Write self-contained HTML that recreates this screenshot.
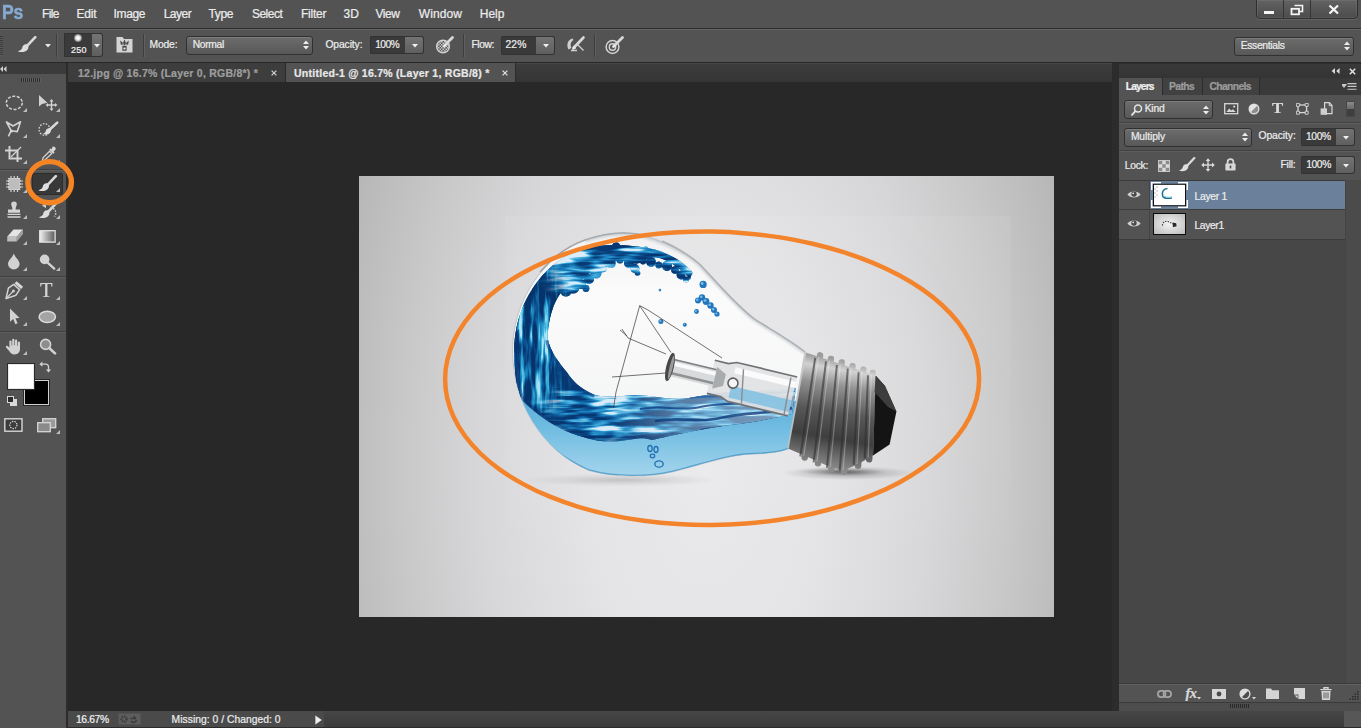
<!DOCTYPE html>
<html lang="en">
<head>
<meta charset="utf-8">
<title>Photoshop</title>
<style>
*{box-sizing:border-box;margin:0;padding:0}
html,body{width:1361px;height:728px;overflow:hidden;background:#282828}
body{position:relative;font-family:"Liberation Sans",sans-serif;font-size:12px;color:#ececec}
.a{position:absolute}
.t{position:absolute;white-space:nowrap;line-height:1;transform-origin:0 0;-webkit-text-stroke:.22px currentColor}
/* ---------- bars ---------- */
#menubar{left:0;top:0;width:1361px;height:28px;background:#535353}
#menuline1{left:0;top:28px;width:1361px;height:1px;background:#2c2c2c}
#optbar{left:0;top:29px;width:1361px;height:33px;background:#535353;border-top:1px solid #666}
#optline{left:0;top:62px;width:1361px;height:1px;background:#272727}
#toolbox{left:0;top:63px;width:66px;height:665px;background:#535353}
#toolhead{left:0;top:63px;width:66px;height:11px;background:#3b3b3b}
#toolsep{left:66px;top:63px;width:2px;height:665px;background:#2c2c2c}
#tabstrip{left:68px;top:63px;width:1045px;height:19px;background:linear-gradient(#474747 0 1px,#3c3c3c 1px,#353535)}
#canvasbg{left:68px;top:82px;width:1051px;height:629px;background:#282828}
#statusband{left:68px;top:711px;width:1293px;height:16px;background:linear-gradient(#464646,#3b3b3b)}
#statusbar{left:68px;top:711px;width:256px;height:16px;background:#4a4a4a}
#bottomline{left:68px;top:727px;width:1293px;height:1px;background:#2b2b2b}
/* ---------- panel ---------- */
#panel{left:1119px;top:63px;width:242px;height:648px;background:#535353}
#panelhead{left:1119px;top:63px;width:242px;height:15px;background:#3a3a3a}
#paneltabs{left:1119px;top:78px;width:242px;height:17px;background:#3e3e3e}
.dd{position:absolute;border:1px solid #303030;border-radius:3px;background:linear-gradient(#6c6c6c,#585858);box-shadow:inset 0 1px 0 rgba(255,255,255,.12)}
.field{position:absolute;background:#3a3a3a;border:1px solid #323232}
.fbtn{position:absolute;background:linear-gradient(#737373,#5f5f5f);border:1px solid #323232;border-left:none;border-radius:0 3px 3px 0}
</style>
</head>
<body>
<!-- base blocks -->
<div class="a" id="menubar"></div>
<div class="a" id="menuline1"></div>
<div class="a" id="optbar"></div>
<div class="a" id="optline"></div>
<div class="a" id="tabstrip"></div>
<div class="a" id="canvasbg"></div>
<div class="a" id="toolbox"></div>
<div class="a" id="toolhead"></div>
<div class="a" id="toolsep"></div>
<div class="a" id="statusband"></div>
<div class="a" id="statusbar"></div>
<div class="a" id="bottomline"></div>
<div class="a" id="panel"></div>
<div class="a" id="panelhead"></div>
<div class="a" id="paneltabs"></div>

<!--MENU-->
<span class="t" style="left:2.2px;top:2.6px;font-size:19.5px;font-weight:700;color:#86aad2;transform:scaleX(.9);letter-spacing:-.3px;-webkit-text-stroke:.5px #86aad2">Ps</span>
<span class="t" style="left:42.1px;top:7.8px;font-size:12px;letter-spacing:-0.65px">File</span>
<span class="t" style="left:76.5px;top:7.8px;font-size:12px;letter-spacing:-0.23px">Edit</span>
<span class="t" style="left:113.5px;top:7.8px;font-size:12px;letter-spacing:-0.34px">Image</span>
<span class="t" style="left:163.7px;top:7.8px;font-size:12px;letter-spacing:-0.51px">Layer</span>
<span class="t" style="left:208.5px;top:7.8px;font-size:12px;letter-spacing:-0.34px">Type</span>
<span class="t" style="left:251.9px;top:7.8px;font-size:12px;letter-spacing:-0.49px">Select</span>
<span class="t" style="left:300.9px;top:7.8px;font-size:12px;letter-spacing:-0.21px">Filter</span>
<span class="t" style="left:343.5px;top:7.8px;font-size:12px;letter-spacing:0.16px">3D</span>
<span class="t" style="left:375.5px;top:7.8px;font-size:12px;letter-spacing:-0.43px">View</span>
<span class="t" style="left:418.8px;top:7.8px;font-size:12px;letter-spacing:0.1px">Window</span>
<span class="t" style="left:479.7px;top:7.8px;font-size:12px;letter-spacing:0.04px">Help</span>
<div class="a" style="left:1256px;top:-1px;width:102px;height:20px;border:1px solid #2f2f2f;border-radius:0 0 4px 4px;background:linear-gradient(#626262,#4c4c4c);box-shadow:0 1px 0 rgba(255,255,255,.10), inset 0 0 0 1px rgba(255,255,255,.07)"></div>
<div class="a" style="left:1283px;top:0;width:1px;height:18px;background:#353535"></div>
<div class="a" style="left:1310px;top:0;width:1px;height:18px;background:#353535"></div>
<div class="a" style="left:1264px;top:11px;width:10px;height:3px;background:#f4f4f4"></div>
<svg class="a" style="left:1290px;top:4px" width="14" height="12" viewBox="0 0 14 12"><path d="M4.5 1.5h8v6h-3" fill="none" stroke="#f4f4f4" stroke-width="1.6"/><rect x="1.5" y="4.8" width="7.5" height="5.5" fill="none" stroke="#f4f4f4" stroke-width="1.8"/></svg>
<svg class="a" style="left:1328px;top:4px" width="12" height="11" viewBox="0 0 12 11"><path d="M1.5 1.5l8.5 8M10 1.5l-8.5 8" stroke="#f4f4f4" stroke-width="2.3" fill="none"/></svg>
<!--OPTIONS-->
<div class="a" style="left:0;top:36px;width:3px;height:20px;background:repeating-linear-gradient(#3a3a3a 0 1px,#5a5a5a 1px 2px)"></div>
<svg class="a" style="left:17px;top:36px" width="20" height="17" viewBox="0 0 20 17"><path d="M18.3 1.2L9.6 10.4" stroke="#d9d9d9" stroke-width="2.6" stroke-linecap="round" fill="none"/><path d="M10.2 8.6C8 7.6 5.6 9.2 5.3 11.4C5 13.6 2.6 14.8 0.8 15.2C4.4 17 9.4 16.2 11.2 12.4C11.8 11 11.4 9.4 10.2 8.6Z" fill="#dedede"/></svg>
<svg class="a" style="left:45px;top:44px" width="6" height="4" viewBox="0 0 6 4"><path d="M0 0h6L3 3.6z" fill="#e6e6e6"/></svg>
<div class="a" style="left:56px;top:34px;width:1px;height:23px;background:#3e3e3e;box-shadow:1px 0 0 #606060"></div>
<div class="field" style="left:64px;top:33px;width:28px;height:23.5px;border-right:none;border-radius:1px 0 0 1px"></div>
<div class="fbtn" style="left:92px;top:33px;width:10.5px;height:23.5px"></div>
<div class="a" style="left:73.6px;top:34.4px;width:8px;height:8px;border-radius:50%;background:radial-gradient(circle,#fff 0 22%,rgba(255,255,255,.75) 45%,rgba(255,255,255,.25) 72%,rgba(255,255,255,0) 100%)"></div>
<svg class="a" style="left:94px;top:44px" width="6" height="4" viewBox="0 0 6 4"><path d="M0 0h6L3 3.6z" fill="#f0f0f0"/></svg>
<svg class="a" style="left:116px;top:36px" width="17" height="17" viewBox="0 0 17 17"><path d="M0.5 1h6l1.5 2h8.5v13.5h-16z" fill="#d4d4d4"/><path d="M4.2 4.6l2.6 2.2-.4 2.2-1.6-.4zM12.8 4.6l-.6 4-1.600000000000001.4-.4-2.2zM8.5 3.6l1.4 3.2-.6 2.2H7.700000000000001l-.6-2.2zM6.400000000000001 9.8h4.2v5H6.400000000000001z" fill="#454545"/><rect x="7.4" y="11.6" width="2.2" height="1.8" fill="#e8e8e8"/></svg>
<div class="a" style="left:143px;top:34px;width:1px;height:23px;background:#3e3e3e;box-shadow:1px 0 0 #606060"></div>
<div class="dd" style="left:185.5px;top:35.5px;width:127px;height:19px"></div>
<svg class="a" style="left:303px;top:40px" width="6" height="10" viewBox="0 0 6 10"><path d="M0 4L3 0.4 6 4zM0 6L3 9.6 6 6z" fill="#ececec"/></svg>
<div class="field" style="left:370px;top:36px;width:35px;height:18px;border-right:none;border-radius:2px 0 0 2px"></div>
<div class="fbtn" style="left:405px;top:36px;width:19px;height:18px"></div>
<svg class="a" style="left:411.5px;top:43.5px" width="6" height="4" viewBox="0 0 6 4"><path d="M0 0h6L3 3.6z" fill="#f0f0f0"/></svg>
<svg class="a" style="left:435px;top:35px" width="20" height="20" viewBox="0 0 20 20"><defs><pattern id="ck" width="3" height="3" patternUnits="userSpaceOnUse"><rect width="1.5" height="1.5" fill="#c8c8c8"/><rect x="1.5" y="1.5" width="1.5" height="1.5" fill="#c8c8c8"/></pattern></defs><circle cx="8" cy="11.5" r="6.3" fill="url(#ck)" stroke="#d2d2d2" stroke-width="1.5"/><path d="M17.5 2.5L9 11" stroke="#d9d9d9" stroke-width="2.8" stroke-linecap="round"/><path d="M9.8 9.2l1.6 1.6-3.4 1.6z" fill="#efefef"/></svg>
<div class="a" style="left:463px;top:34px;width:1px;height:23px;background:#3e3e3e;box-shadow:1px 0 0 #606060"></div>
<div class="field" style="left:501px;top:36px;width:35px;height:19px;border-right:none;border-radius:2px 0 0 2px"></div>
<div class="fbtn" style="left:536px;top:36px;width:19px;height:19px"></div>
<svg class="a" style="left:542.5px;top:44px" width="6" height="4" viewBox="0 0 6 4"><path d="M0 0h6L3 3.6z" fill="#f0f0f0"/></svg>
<svg class="a" style="left:565px;top:35px" width="21" height="19" viewBox="0 0 21 19"><path d="M7.5 3.5C3 4.5 1 9.5 3.5 14.5L6.5 13C5 10 5.5 6.5 8.5 5z" fill="#cfcfcf"/><path d="M18.5 2.5L8.5 13" stroke="#d9d9d9" stroke-width="2.6" stroke-linecap="round"/><path d="M8.6 10.6L7 15.2l4.4-2z" fill="#e8e8e8"/><path d="M12 9l6.5 6.5M6 15.5h6" stroke="#d0d0d0" stroke-width="1.3" fill="none"/></svg>
<div class="a" style="left:594px;top:34px;width:1px;height:23px;background:#3e3e3e;box-shadow:1px 0 0 #606060"></div>
<svg class="a" style="left:605px;top:35px" width="20" height="20" viewBox="0 0 20 20"><circle cx="7.5" cy="12" r="6.4" fill="none" stroke="#d2d2d2" stroke-width="1.5"/><circle cx="7.5" cy="12" r="3.2" fill="none" stroke="#d2d2d2" stroke-width="1.4"/><path d="M17.5 2.5L8.5 11.5" stroke="#d9d9d9" stroke-width="2.8" stroke-linecap="round"/><path d="M9.4 9.6l1.6 1.6-3.6 1.8z" fill="#efefef"/></svg>
<div class="dd" style="left:1233.5px;top:36.5px;width:120.5px;height:19px"></div>
<svg class="a" style="left:1343.5px;top:41px" width="6" height="10" viewBox="0 0 6 10"><path d="M0 4L3 0.4 6 4zM0 6L3 9.6 6 6z" fill="#ececec"/></svg>
<span class="t" style="left:71.1px;top:45.6px;font-size:9px;letter-spacing:0.14px;color:#f2f2f2">250</span>
<span class="t" style="left:149.5px;top:39.5px;font-size:10.3px;letter-spacing:-0.15px">Mode:</span>
<span class="t" style="left:192.7px;top:39.5px;font-size:10.3px;letter-spacing:-0.31px">Normal</span>
<span class="t" style="left:325.4px;top:39.5px;font-size:10.3px;letter-spacing:-0.09px">Opacity:</span>
<span class="t" style="left:375.2px;top:39.5px;font-size:10.3px;letter-spacing:-0.61px">100%</span>
<span class="t" style="left:471.5px;top:39.5px;font-size:10.3px;letter-spacing:-0.45px">Flow:</span>
<span class="t" style="left:505.5px;top:39.5px;font-size:10.3px;letter-spacing:0.11px">22%</span>
<span class="t" style="left:1240.7px;top:40.5px;font-size:10.3px;letter-spacing:-0.31px">Essentials</span>
<!--TABS-->
<div class="a" style="left:68px;top:63px;width:217px;height:19px;background:#3d3d3d"></div>
<div class="a" style="left:285px;top:63px;width:231px;height:19px;background:#535353;border-left:1px solid #2b2b2b;border-right:1px solid #2b2b2b"></div>
<svg class="a" style="left:271px;top:70px" width="6" height="6" viewBox="0 0 6 6"><path d="M0.6 0.6l4.8 4.8M5.4 0.6L0.6 5.4" stroke="#cfcfcf" stroke-width="1.25"/></svg>
<svg class="a" style="left:502px;top:70px" width="6" height="6" viewBox="0 0 6 6"><path d="M0.6 0.6l4.8 4.8M5.4 0.6L0.6 5.4" stroke="#e0e0e0" stroke-width="1.25"/></svg>
<span class="t" style="left:78.0px;top:67.9px;font-size:10.5px;letter-spacing:0.24px;color:#9d9d9d;font-weight:700">12.jpg @ 16.7% (Layer 0, RGB/8*) *</span>
<span class="t" style="left:294.0px;top:67.9px;font-size:10.5px;letter-spacing:0.26px;color:#e8e8e8;font-weight:700">Untitled-1 @ 16.7% (Layer 1, RGB/8) *</span>
<!--TOOLS-->
<svg class="a" style="left:0px;top:66px" width="7" height="6" viewBox="0 0 7 6"><path d="M3 0v6L0 3zM6.5 0v6l-3-3z" fill="#d0d0d0"/></svg>
<div class="a" style="left:21px;top:78px;width:20px;height:4px;background:repeating-linear-gradient(90deg,#2e2e2e 0 1px,#5e5e5e 1px 2px)"></div>
<!-- ellipse marquee -->
<svg class="a" style="left:5px;top:95px" width="19" height="16" viewBox="0 0 19 16"><ellipse cx="9.3" cy="7.8" rx="8" ry="6.6" fill="none" stroke="#d2d2d2" stroke-width="1.5" stroke-dasharray="3 1.6"/></svg>
<!-- move -->
<svg class="a" style="left:38px;top:94px" width="20" height="17" viewBox="0 0 20 17"><path d="M1 1v11.5l3-2.6 5.4-1.2z" fill="#d2d2d2"/><path d="M13.5 6.5v9M9 11h9" stroke="#d2d2d2" stroke-width="1.4"/><path d="M13.5 5l2 2.4h-4zM13.5 17l2-2.4h-4zM7.6 11l2.4-2v4zM19.4 11l-2.4-2v4z" fill="#d2d2d2"/></svg>
<!-- polygonal lasso -->
<svg class="a" style="left:5px;top:120px" width="18" height="18" viewBox="0 0 18 18"><path d="M1.5 2l6.5 4 7.5-4.2-3.2 9.8-6-.8z" fill="none" stroke="#d2d2d2" stroke-width="1.6" stroke-linejoin="round"/><path d="M6.2 10.6L3.4 16.4" stroke="#d2d2d2" stroke-width="1.6"/><circle cx="6.4" cy="11" r="1.6" fill="#d2d2d2"/></svg>
<!-- quick selection -->
<svg class="a" style="left:38px;top:121px" width="21" height="16" viewBox="0 0 21 16"><ellipse cx="6.5" cy="8.5" rx="5.4" ry="5.8" fill="none" stroke="#d2d2d2" stroke-width="1.3" stroke-dasharray="1.6 1.4"/><path d="M19.2 1.6L11.2 9" stroke="#d9d9d9" stroke-width="2.6" stroke-linecap="round"/><path d="M12 7.4c-2-.6-4 .8-4.2 2.6-.2 1.6-1.6 2.4-3 2.8 3 1.4 6.8.6 8-2.4.4-1.2.2-2.4-.8-3z" fill="#dedede"/></svg>
<!-- crop -->
<svg class="a" style="left:5px;top:146px" width="18" height="17" viewBox="0 0 18 17"><path d="M4.5 0v12.5H17M0 4.5h12.5V16" fill="none" stroke="#d2d2d2" stroke-width="2"/><path d="M16 1L6 11" stroke="#d2d2d2" stroke-width="1.2"/></svg>
<!-- eyedropper -->
<svg class="a" style="left:40px;top:146px" width="17" height="16" viewBox="0 0 17 16"><path d="M12.8 0.6c1.4-.8 3.6 1.2 2.8 2.8l-2 2.2 1 1-1.2 1.2-4.2-4.2L10.4 2.4l1 1z" fill="#d8d8d8"/><path d="M9.6 5.2l2.2 2.2-6.6 6.4-2.8 1.2 0.6-3.2z" fill="none" stroke="#d2d2d2" stroke-width="1.3"/></svg>
<div class="a" style="left:0;top:169px;width:66px;height:1px;background:#3f3f3f;box-shadow:0 1px 0 #5f5f5f"></div>
<!-- patch / healing -->
<svg class="a" style="left:6px;top:176px" width="17" height="16" viewBox="0 0 17 16"><rect x="2.5" y="2.5" width="11.5" height="11" fill="#bdbdbd" stroke="#d8d8d8" stroke-width="1.2" stroke-dasharray="2 1.2"/><path d="M5 0v3M8.2 0v3M11.5 0v3M5 13v3M8.2 13v3M11.5 13v3M0 5h3M0 8h3M0 11h3M14 5h3M14 8h3M14 11h3" stroke="#d2d2d2" stroke-width="1.2"/></svg>
<!-- selected brush -->
<div class="a" style="left:32px;top:173px;width:31px;height:22px;background:#383838;border:1px solid #2c2c2c;border-radius:2px"></div>
<svg class="a" style="left:37px;top:175px" width="21" height="17" viewBox="0 0 20 17"><path d="M18.3 1.2L9.6 10.4" stroke="#d9d9d9" stroke-width="2.6" stroke-linecap="round" fill="none"/><path d="M10.2 8.6C8 7.6 5.6 9.2 5.3 11.4C5 13.6 2.6 14.8 0.8 15.2C4.4 17 9.4 16.2 11.2 12.4C11.8 11 11.4 9.4 10.2 8.6Z" fill="#dedede"/></svg>
<!-- stamp -->
<svg class="a" style="left:6px;top:201px" width="16" height="18" viewBox="0 0 16 18"><path d="M5.2 3.2a2.8 2.8 0 1 1 5.600000000000001 0c0 1.600000000000001-1.2 2.6-1.2 5.2h4.4v3.4H2V8.4h4.4c0-2.6-1.2-3.6-1.2-5.2z" fill="#d4d4d4"/><path d="M1.5 13.4h13M1.5 16h13" stroke="#d4d4d4" stroke-width="1.4"/></svg>
<!-- history brush -->
<svg class="a" style="left:38px;top:202px" width="20" height="17" viewBox="0 0 20 17"><path d="M18.3 1.2L10.6 9.4" stroke="#d9d9d9" stroke-width="2.6" stroke-linecap="round" fill="none"/><path d="M10.2 8.6C8 7.6 5.6 9.2 5.3 11.4C5 13.6 2.6 14.8 0.8 15.2C4.4 17 9.4 16.2 11.2 12.4C11.8 11 11.4 9.4 10.2 8.6Z" fill="#dedede"/><path d="M12.5 5.5a5.5 5.5 0 0 1 4 9" fill="none" stroke="#cfcfcf" stroke-width="1.3" stroke-dasharray="1.6 1.2"/><path d="M4 3.5l4-2.6v5.4z" fill="#cfcfcf"/></svg>
<!-- eraser -->
<svg class="a" style="left:6px;top:228px" width="18" height="15" viewBox="0 0 18 15"><path d="M7.5 1.5h9.5l-6.2 7.2H1.2z" fill="#e4e4e4"/><path d="M1.2 8.7h9.6v4.8H1.2z" fill="#bcbcbc"/><path d="M10.8 8.7L17 1.5v4.600000000000001l-6.2 7.4z" fill="#9f9f9f"/></svg>
<!-- gradient -->
<svg class="a" style="left:39px;top:230px" width="17" height="13" viewBox="0 0 17 13"><defs><linearGradient id="gt" x1="0" x2="1"><stop offset="0" stop-color="#f2f2f2"/><stop offset="1" stop-color="#5a5a5a"/></linearGradient></defs><rect x=".7" y=".7" width="15.4" height="11.4" fill="url(#gt)" stroke="#e2e2e2" stroke-width="1.3"/></svg>
<!-- blur drop -->
<svg class="a" style="left:7px;top:253px" width="14" height="17" viewBox="0 0 14 17"><path d="M6.8 0.6C8.2 4.6 12.6 7.4 12.6 11A5.8 5.4 0 0 1 1 11C1 7.4 5.4 4.6 6.8 0.6z" fill="#d2d2d2"/></svg>
<!-- dodge -->
<svg class="a" style="left:39px;top:254px" width="17" height="16" viewBox="0 0 17 16"><circle cx="5.6" cy="5.4" r="4.8" fill="#d2d2d2"/><path d="M8.6 8.6l6.6 6" stroke="#d2d2d2" stroke-width="2.4" stroke-linecap="round"/></svg>
<div class="a" style="left:0;top:276px;width:66px;height:1px;background:#3f3f3f;box-shadow:0 1px 0 #5f5f5f"></div>
<!-- pen -->
<svg class="a" style="left:5px;top:280px" width="20" height="20" viewBox="0 0 20 20"><path d="M11.5 1.2l6.6 5.6-2 2.200000000000001-6.6-5.6z" fill="#d8d8d8"/><path d="M8.6 4.4l6 5.2-3.6 5.6L1 18.6 3.4 8.2z" fill="none" stroke="#d2d2d2" stroke-width="1.5" stroke-linejoin="round"/><path d="M1.4 18.2l6.4-6.6" stroke="#d2d2d2" stroke-width="1.3"/><circle cx="8.4" cy="11" r="1.5" fill="#d2d2d2"/></svg>
<!-- T -->
<span class="t" style="left:40.2px;top:279.5px;font-size:20px;font-family:'Liberation Serif',serif;color:#d6d6d6;transform:scaleX(1.02)">T</span>
<!-- path selection arrow -->
<svg class="a" style="left:9px;top:308px" width="12" height="17" viewBox="0 0 12 17"><path d="M1 0.6v13.2l3.2-2.8 2.2 5.2 2.2-.9-2.2-5 4.2-.3z" fill="#d2d2d2"/></svg>
<!-- ellipse shape -->
<svg class="a" style="left:38px;top:310px" width="19" height="14" viewBox="0 0 19 14"><ellipse cx="9.3" cy="6.8" rx="8.2" ry="5.6" fill="#a4a4a4" stroke="#dcdcdc" stroke-width="1.5"/></svg>
<div class="a" style="left:0;top:331px;width:66px;height:1px;background:#3f3f3f;box-shadow:0 1px 0 #5f5f5f"></div>
<!-- hand -->
<svg class="a" style="left:5px;top:338px" width="18" height="17" viewBox="0 0 18 17"><path d="M4.4 9.4V3.600000000000001a1.1 1.1 0 0 1 2.2 0V7.4h.6V1.8a1.1 1.1 0 0 1 2.2 0v5.4h.6V2.6a1.1 1.1 0 0 1 2.2 0v5.2h.6V4.6a1.1 1.1 0 0 1 2.2 0v6.2c0 3.4-2 5.6-5.4 5.600000000000001-2.8 0-4-1-5.4-3.4L1 9.4c-.6-1.2.8-2.2 1.800000000000001-1.200000000000001z" fill="#d2d2d2"/></svg>
<!-- zoom -->
<svg class="a" style="left:39px;top:338px" width="18" height="17" viewBox="0 0 18 17"><circle cx="6.6" cy="6.4" r="5" fill="#8d8d8d" stroke="#d2d2d2" stroke-width="1.6"/><path d="M10.4 10.2l5.6 5.2" stroke="#d2d2d2" stroke-width="2.6" stroke-linecap="round"/></svg>
<!-- colour swatches -->
<div class="a" style="left:24px;top:380px;width:25px;height:25px;background:#000;border:1px solid #d0d0d0;box-shadow:0 0 0 1px #2a2a2a"></div>
<div class="a" style="left:8px;top:364px;width:26px;height:25px;background:#fff;border:1px solid #e8e8e8;box-shadow:0 0 0 1px #2a2a2a"></div>
<svg class="a" style="left:39px;top:361px" width="12" height="12" viewBox="0 0 12 12"><path d="M2.5 3.2h4.5a2.5 2.5 0 0 1 2.500000000000001 2.5V9" fill="none" stroke="#d2d2d2" stroke-width="1.3"/><path d="M0.4 3.2l3-2.600000000000001v5.2zM9.5 11.6l-2.600000000000001-3h5.2z" fill="#d2d2d2"/></svg>
<div class="a" style="left:10px;top:399px;width:7px;height:7px;background:#d8d8d8;border:1px solid #d8d8d8"></div>
<div class="a" style="left:7px;top:396px;width:7px;height:7px;background:#2c2c2c;border:1px solid #d8d8d8"></div>
<!-- quick mask -->
<svg class="a" style="left:4px;top:418px" width="19" height="14" viewBox="0 0 19 14"><rect x=".8" y=".8" width="17.2" height="12.4" fill="#3c3c3c" stroke="#d6d6d6" stroke-width="1.4"/><circle cx="9.4" cy="7" r="3.600000000000001" fill="none" stroke="#e2e2e2" stroke-width="1.2" stroke-dasharray="1.4 1.1"/></svg>
<!-- screen mode -->
<svg class="a" style="left:37px;top:418px" width="20" height="15" viewBox="0 0 20 15"><rect x="5.7" y=".7" width="13" height="9" fill="#9a9a9a" stroke="#d6d6d6" stroke-width="1.3"/><rect x=".7" y="4.7" width="12.6" height="9" fill="#8a8a8a" stroke="#d6d6d6" stroke-width="1.3"/></svg>
<svg class="a" style="left:23px;top:108px" width="4" height="4" viewBox="0 0 4 4"><path d="M4 0v4H0z" fill="#bdbdbd"/></svg>
<svg class="a" style="left:56px;top:108px" width="4" height="4" viewBox="0 0 4 4"><path d="M4 0v4H0z" fill="#bdbdbd"/></svg>
<svg class="a" style="left:23px;top:134px" width="4" height="4" viewBox="0 0 4 4"><path d="M4 0v4H0z" fill="#bdbdbd"/></svg>
<svg class="a" style="left:56px;top:134px" width="4" height="4" viewBox="0 0 4 4"><path d="M4 0v4H0z" fill="#bdbdbd"/></svg>
<svg class="a" style="left:23px;top:160px" width="4" height="4" viewBox="0 0 4 4"><path d="M4 0v4H0z" fill="#bdbdbd"/></svg>
<svg class="a" style="left:56px;top:160px" width="4" height="4" viewBox="0 0 4 4"><path d="M4 0v4H0z" fill="#bdbdbd"/></svg>
<svg class="a" style="left:23px;top:189px" width="4" height="4" viewBox="0 0 4 4"><path d="M4 0v4H0z" fill="#bdbdbd"/></svg>
<svg class="a" style="left:56px;top:188px" width="4" height="4" viewBox="0 0 4 4"><path d="M4 0v4H0z" fill="#bdbdbd"/></svg>
<svg class="a" style="left:23px;top:215px" width="4" height="4" viewBox="0 0 4 4"><path d="M4 0v4H0z" fill="#bdbdbd"/></svg>
<svg class="a" style="left:56px;top:215px" width="4" height="4" viewBox="0 0 4 4"><path d="M4 0v4H0z" fill="#bdbdbd"/></svg>
<svg class="a" style="left:23px;top:241px" width="4" height="4" viewBox="0 0 4 4"><path d="M4 0v4H0z" fill="#bdbdbd"/></svg>
<svg class="a" style="left:56px;top:241px" width="4" height="4" viewBox="0 0 4 4"><path d="M4 0v4H0z" fill="#bdbdbd"/></svg>
<svg class="a" style="left:23px;top:267px" width="4" height="4" viewBox="0 0 4 4"><path d="M4 0v4H0z" fill="#bdbdbd"/></svg>
<svg class="a" style="left:56px;top:267px" width="4" height="4" viewBox="0 0 4 4"><path d="M4 0v4H0z" fill="#bdbdbd"/></svg>
<svg class="a" style="left:23px;top:296px" width="4" height="4" viewBox="0 0 4 4"><path d="M4 0v4H0z" fill="#bdbdbd"/></svg>
<svg class="a" style="left:56px;top:296px" width="4" height="4" viewBox="0 0 4 4"><path d="M4 0v4H0z" fill="#bdbdbd"/></svg>
<svg class="a" style="left:23px;top:322px" width="4" height="4" viewBox="0 0 4 4"><path d="M4 0v4H0z" fill="#bdbdbd"/></svg>
<svg class="a" style="left:56px;top:322px" width="4" height="4" viewBox="0 0 4 4"><path d="M4 0v4H0z" fill="#bdbdbd"/></svg>
<svg class="a" style="left:23px;top:351px" width="4" height="4" viewBox="0 0 4 4"><path d="M4 0v4H0z" fill="#bdbdbd"/></svg>
<svg class="a" style="left:56px;top:430px" width="4" height="4" viewBox="0 0 4 4"><path d="M4 0v4H0z" fill="#bdbdbd"/></svg>
<svg class="a" style="left:20px;top:154px" width="60" height="56" viewBox="0 0 60 56"><ellipse cx="29.65" cy="28.15" rx="21.75" ry="20.55" fill="none" stroke="#f58425" stroke-width="5.4"/></svg>
<!--CANVAS-->
<svg class="a" style="left:359px;top:176px" width="695" height="441" viewBox="359 176 695 441">
<defs>
<radialGradient id="bg" cx="706" cy="470" r="400" gradientUnits="userSpaceOnUse" gradientTransform="translate(706 470) scale(1 1.85) translate(-706 -470)"><stop offset="0" stop-color="#eaeaec"/><stop offset=".3" stop-color="#e4e4e6"/><stop offset=".55" stop-color="#d8d8da"/><stop offset=".75" stop-color="#c9c9ca"/><stop offset="1" stop-color="#b3b3b4"/></radialGradient>
<linearGradient id="gl" x1="0" y1="0" x2="0" y2="1"><stop offset="0" stop-color="#f1f1f2"/><stop offset=".25" stop-color="#fbfbfb"/><stop offset="1" stop-color="#f1f2f3"/></linearGradient>
<linearGradient id="lb" x1="0" y1="395" x2="0" y2="478" gradientUnits="userSpaceOnUse"><stop offset="0" stop-color="#58acd8"/><stop offset=".45" stop-color="#74bee2"/><stop offset="1" stop-color="#a6d6ed"/></linearGradient>
<linearGradient id="wv" x1="515" y1="300" x2="600" y2="320" gradientUnits="userSpaceOnUse"><stop offset="0" stop-color="#12508f"/><stop offset=".35" stop-color="#196aad"/><stop offset=".7" stop-color="#278ac6"/><stop offset="1" stop-color="#1660a3"/></linearGradient>
<linearGradient id="mt" x1="843" y1="360" x2="824" y2="468" gradientUnits="userSpaceOnUse"><stop offset="0" stop-color="#9c9c9c"/><stop offset=".09" stop-color="#d2d2d2"/><stop offset=".24" stop-color="#929292"/><stop offset=".48" stop-color="#585858"/><stop offset=".72" stop-color="#3e3e3e"/><stop offset=".9" stop-color="#727272"/><stop offset="1" stop-color="#8c8c8c"/></linearGradient>
<radialGradient id="sh"><stop offset="0" stop-color="#000" stop-opacity=".36"/><stop offset=".55" stop-color="#000" stop-opacity=".13"/><stop offset="1" stop-color="#000" stop-opacity="0"/></radialGradient>
<linearGradient id="pr" x1="0" y1="0" x2="0" y2="1"><stop offset="0" stop-color="#fff" stop-opacity=".06"/><stop offset=".6" stop-color="#fff" stop-opacity=".04"/><stop offset="1" stop-color="#fff" stop-opacity="0"/></linearGradient>
<linearGradient id="lt" x1="610" y1="0" x2="800" y2="0" gradientUnits="userSpaceOnUse"><stop offset="0" stop-color="#d4ecf8" stop-opacity="0"/><stop offset=".35" stop-color="#d4ecf8" stop-opacity=".38"/><stop offset="1" stop-color="#d9eef9" stop-opacity=".6"/></linearGradient>
<linearGradient id="sf" x1="520" y1="0" x2="720" y2="0" gradientUnits="userSpaceOnUse"><stop offset="0" stop-color="#0b2f6b" stop-opacity=".55"/><stop offset=".55" stop-color="#0b2f6b" stop-opacity=".45"/><stop offset="1" stop-color="#0b2f6b" stop-opacity="0"/></linearGradient>
<clipPath id="gc"><path d="M805 352C790 340 770 329 755 319.4C738 307 722 288 700 264.5C684 250 660 240 640 234.5C625 231.5 605 233 585 240C545 254 513 300 512.6 350C512.6 400 540 450 589 470.5C615 478 650 477 672 472C700 465 722 457 745 454.5C760 453.5 775 454 788 449Z"/></clipPath>
<clipPath id="wc"><path d="M692 272C684 262 668 252 650 248.5C630 245 605 243 585 247.5C546 259 514.6 301 514.2 350C514.2 366 515.5 382 518.5 396C530 409 548 424 572 433.5C590 439.5 600 442 612 441.5C635 440 640 436 652 440C670 436 700 429 730 425C755 422 775 418 792 414L796 388C770 391 745 392 730 392.2C712 393 700 397 682 398.5C668 399.5 655 396 636 395C622 396 608 398 594.8 395C580 389 572 380 567.4 373C558 362 550 350 548 340C547 325 552 305 560 294C568 284 578 280 583.4 279C590 272 598 267 606 264C614 261 622 259 630 262C636 266 642 262 650 257.5C660 256 670 262 678 268C684 272 688 276 690 280Z"/><circle cx="566.0" cy="291.0" r="5.5"/><circle cx="573.0" cy="287.0" r="6.5"/><circle cx="581.0" cy="284.0" r="5.0"/><circle cx="586.0" cy="288.5" r="3.4"/><circle cx="589.0" cy="279.0" r="5.0"/><circle cx="596.0" cy="273.0" r="5.5"/><circle cx="603.0" cy="268.0" r="4.2"/><circle cx="611.0" cy="263.5" r="4.6"/><circle cx="620.0" cy="260.0" r="3.6"/><circle cx="629.0" cy="263.0" r="5.0"/><circle cx="635.0" cy="268.5" r="4.4"/><circle cx="637.5" cy="273.0" r="2.8"/><circle cx="643.0" cy="261.0" r="3.4"/><circle cx="651.0" cy="262.0" r="4.8"/><circle cx="659.0" cy="265.0" r="3.6"/><circle cx="667.0" cy="266.0" r="5.0"/><circle cx="675.0" cy="270.0" r="3.8"/><circle cx="681.0" cy="275.0" r="4.4"/><circle cx="686.0" cy="279.5" r="3.0"/><circle cx="689.0" cy="273.0" r="3.4"/><circle cx="616.0" cy="246.5" r="4.2"/><circle cx="608.0" cy="248.5" r="3.4"/><circle cx="600.0" cy="250.0" r="2.6"/><circle cx="646.0" cy="249.0" r="2.6"/></clipPath>
<radialGradient id="vmg" cx="527" cy="340" r="1" gradientUnits="userSpaceOnUse" gradientTransform="translate(527 340) scale(52 95) translate(-527 -340)"><stop offset="0" stop-color="#fff"/><stop offset=".62" stop-color="#fff"/><stop offset="1" stop-color="#000"/></radialGradient>
<mask id="vm" maskUnits="userSpaceOnUse" x="470" y="230" width="130" height="230"><rect x="470" y="230" width="130" height="230" fill="url(#vmg)"/></mask>
<filter id="b2" x="-10%" y="-10%" width="120%" height="120%"><feGaussianBlur stdDeviation="1.2"/></filter>
<filter id="wtv" x="0" y="0" width="100%" height="100%" color-interpolation-filters="sRGB"><feTurbulence type="fractalNoise" baseFrequency=".16 .022" numOctaves="3" seed="4"/><feColorMatrix type="matrix" values="3.4 0 0 0 -1.46  3.4 0 0 0 -1.46  3.4 0 0 0 -1.46  0 0 0 0 1"/><feComponentTransfer><feFuncR type="table" tableValues=".03 .04 .07 .13 .3 .66"/><feFuncG type="table" tableValues=".2 .29 .43 .57 .74 .9"/><feFuncB type="table" tableValues=".42 .53 .66 .78 .89 .97"/></feComponentTransfer></filter>
<filter id="wth" x="0" y="0" width="100%" height="100%" color-interpolation-filters="sRGB"><feTurbulence type="fractalNoise" baseFrequency=".022 .15" numOctaves="3" seed="9"/><feColorMatrix type="matrix" values="3.4 0 0 0 -1.34  3.4 0 0 0 -1.34  3.4 0 0 0 -1.34  0 0 0 0 1"/><feComponentTransfer><feFuncR type="table" tableValues=".03 .05 .09 .2 .5 .92"/><feFuncG type="table" tableValues=".21 .31 .46 .63 .82 .97"/><feFuncB type="table" tableValues=".43 .56 .7 .84 .94 1"/></feComponentTransfer></filter>
</defs>
<rect x="359" y="176" width="695" height="441" fill="url(#bg)"/>
<rect x="505" y="216" width="506" height="360" fill="url(#pr)"/>
<ellipse cx="622" cy="480" rx="98" ry="6.500" fill="url(#sh)" opacity=".45"/>
<ellipse cx="848" cy="473" rx="66" ry="7" fill="url(#sh)"/>
<ellipse cx="842" cy="471.500" rx="44" ry="4" fill="url(#sh)"/>
<path d="M805 352C790 340 770 329 755 319.4C738 307 722 288 700 264.5C684 250 660 240 640 234.5C625 231.5 605 233 585 240C545 254 513 300 512.6 350C512.6 400 540 450 589 470.5C615 478 650 477 672 472C700 465 722 457 745 454.5C760 453.5 775 454 788 449Z" fill="url(#gl)" stroke="#c5c9cd" stroke-width="1.2"/>
<path d="M640 234.500C625 231.500 605 233 585 240C568 246 552 258 540 272" fill="none" stroke="#9da2a7" stroke-width="1.500" opacity=".9"/>
<path d="M805 352C790 340 770 329 755 319.400C738 307 722 288 700 264.500C690 256 676 247 662 241" fill="none" stroke="#a9adb1" stroke-width="1.600" opacity=".9"/>
<g clip-path="url(#gc)">
<path d="M805 352C790 340 770 329 755 319.400C738 307 722 288 700 264.500C684 250 660 240 640 234.500C625 231.500 605 233 585 240" fill="none" stroke="#b4b9be" stroke-width="5" opacity=".55" filter="url(#b2)"/>
<path d="M514 380L560 410 620 425 700 415 800 400 812 470 640 485 520 470Z" fill="url(#lb)"/>
<path d="M528 422C545 446 567 461 589 470.500C615 478 650 477 672 472C700 465 722 457 745 454.500C760 453.500 775 454 788 449" fill="none" stroke="#3f8fc0" stroke-width="2.400" opacity=".7"/>
<g clip-path="url(#wc)">
<rect x="505" y="236" width="300" height="215" fill="url(#wv)"/>
<rect x="505" y="236" width="300" height="216" filter="url(#wth)" opacity=".92"/>
<g mask="url(#vm)"><rect x="470" y="230" width="130" height="230" filter="url(#wtv)"/></g>
<rect x="610" y="380" width="200" height="75" fill="url(#lt)"/>
<path d="M640 409C660 404 680 412 700 407C720 402 745 406 792 398" fill="none" stroke="#0f4488" stroke-width="2" opacity=".8"/>
<path d="M655 421C680 416 700 424 725 417C750 412 770 414 792 408" fill="none" stroke="#0c3b7c" stroke-width="2.600" opacity=".8"/>
<path d="M690 398C710 394 735 399 760 394C775 392 785 393 795 391" fill="none" stroke="#1a5ea6" stroke-width="1.600" opacity=".8"/>
<path d="M700 430C720 426 745 426 770 420" fill="none" stroke="#0c3b7c" stroke-width="1.800" opacity=".7"/>
<path d="M514.500 330C514.200 366 515.500 382 518.500 396" fill="none" stroke="#0b2f6b" stroke-width="9" opacity=".5"/>
<path d="M548 340C550 350 558 362 567.400 373C572 380 580 389 594.800 395" fill="none" stroke="#0d3a7a" stroke-width="6" opacity=".55"/>
<path d="M518.500 396C530 409 548 424 572 433.500C590 439.500 600 442 612 441.500C635 440 640 436 652 440C670 436 700 429 730 425" fill="none" stroke="url(#sf)" stroke-width="7"/>
</g>
</g>
<circle cx="703.1" cy="284.4" r="3.6" fill="#2276bd"/>
<circle cx="702.2" cy="283.5" r="1.4" fill="#8fd0f0" opacity=".8"/>
<circle cx="660.9" cy="321.5" r="2.5" fill="#2276bd"/>
<circle cx="660.3" cy="320.9" r="1.0" fill="#8fd0f0" opacity=".8"/>
<circle cx="684.8" cy="324.8" r="2.0" fill="#2276bd"/>
<circle cx="684.3" cy="324.3" r="0.8" fill="#8fd0f0" opacity=".8"/>
<circle cx="659.9" cy="290.1" r="1.3" fill="#2276bd"/>
<circle cx="659.6" cy="289.8" r="0.5" fill="#8fd0f0" opacity=".8"/>
<circle cx="698.0" cy="300.5" r="3.0" fill="#2276bd"/>
<circle cx="697.2" cy="299.8" r="1.2" fill="#8fd0f0" opacity=".8"/>
<circle cx="702.0" cy="297.5" r="3.2" fill="#2276bd"/>
<circle cx="701.2" cy="296.7" r="1.3" fill="#8fd0f0" opacity=".8"/>
<circle cx="706.0" cy="301.5" r="3.4" fill="#2276bd"/>
<circle cx="705.1" cy="300.6" r="1.4" fill="#8fd0f0" opacity=".8"/>
<circle cx="710.5" cy="305.5" r="3.2" fill="#2276bd"/>
<circle cx="709.7" cy="304.7" r="1.3" fill="#8fd0f0" opacity=".8"/>
<circle cx="714.0" cy="310.0" r="3.0" fill="#2276bd"/>
<circle cx="713.2" cy="309.2" r="1.2" fill="#8fd0f0" opacity=".8"/>
<circle cx="717.0" cy="314.0" r="2.6" fill="#2276bd"/>
<circle cx="716.4" cy="313.4" r="1.0" fill="#8fd0f0" opacity=".8"/>
<circle cx="696.5" cy="311.5" r="2.4" fill="#2276bd"/>
<circle cx="695.9" cy="310.9" r="1.0" fill="#8fd0f0" opacity=".8"/>
<ellipse cx="650.0" cy="448.5" rx="2.2" ry="3.0" fill="none" stroke="#1f6fb0" stroke-width="1.3"/>
<ellipse cx="656.0" cy="449.5" rx="2.0" ry="3.0" fill="none" stroke="#1f6fb0" stroke-width="1.3"/>
<ellipse cx="659.0" cy="464.0" rx="4.2" ry="3.2" fill="none" stroke="#1f6fb0" stroke-width="1.3"/>
<ellipse cx="652.5" cy="456.0" rx="2.2" ry="1.8" fill="none" stroke="#1f6fb0" stroke-width="1.3"/>
<path d="M639.700 305.700L616 392 613.500 408M639.700 305.700L671 352.500M639.700 305.700L648 310 722 358M621.900 329L628 338 666 354M612 377L666 373M620 330L627 336" fill="none" stroke="#3a3a3a" stroke-width=".9" opacity=".8"/>
<g transform="rotate(13.500 670 367)">
<path d="M712 350h14l8-3h62v40h-62l-8-3h-14z" fill="#dfe2e4" opacity=".92"/>
<path d="M712 350h14l8-3h62M712 384h14l8 3h62" fill="none" stroke="#6f7275" stroke-width="1.700"/>
<rect x="734" y="352" width="62" height="6" fill="#fbfbfb"/><rect x="734" y="371" width="62" height="12" fill="#7fc0e2" opacity=".85"/>
<rect x="672" y="358" width="44" height="18" fill="#d8dadb"/>
<rect x="672" y="361" width="44" height="4" fill="#fafafa"/><rect x="672" y="371.500" width="44" height="2.500" fill="#8f9294"/><rect x="672" y="358" width="44" height="1.600" fill="#7d8083"/>
<ellipse cx="670" cy="367" rx="3.800" ry="14.500" fill="#474747"/><ellipse cx="671.200" cy="367" rx="1.600" ry="12" fill="#9a9a9a"/>
<path d="M716 356l10 5v12l-10 5z" fill="#a9acae"/>
<circle cx="735" cy="368" r="5" fill="#f4f4f4" stroke="#5e6164" stroke-width="1.600"/>
<path d="M742 352l6 34M790 349l2 38" stroke="#8a8d90" stroke-width="1.400"/>
</g>
<path d="M805.800 352.400L875.800 375.700L873 455.400L856.600 465L842.900 470.500L829 466.400L810 458L788 448.500Z" fill="url(#mt)"/>
<path d="M805.800 352.400L788 448.500" stroke="#c9c9c9" stroke-width="1.600" opacity=".8"/>
<path d="M820.1 355.3L804.7 457.6" stroke="url(#mt)" stroke-width="6.400" stroke-linecap="round"/>
<path d="M815.2 357.8L800.3 456.5" stroke="#2f2f2f" stroke-width="2" opacity=".6"/>
<path d="M818.6 357.1L803.7 455.8" stroke="#fff" stroke-width="1.200" opacity=".28"/>
<path d="M830.9 358.9L818.0 463.4" stroke="url(#mt)" stroke-width="6.400" stroke-linecap="round"/>
<path d="M826.0 361.4L813.6 462.3" stroke="#2f2f2f" stroke-width="2" opacity=".6"/>
<path d="M829.4 360.7L817.0 461.6" stroke="#fff" stroke-width="1.200" opacity=".28"/>
<path d="M841.7 362.5L831.3 468.9" stroke="url(#mt)" stroke-width="6.400" stroke-linecap="round"/>
<path d="M836.9 365.0L826.9 467.8" stroke="#2f2f2f" stroke-width="2" opacity=".6"/>
<path d="M840.3 364.3L830.3 467.1" stroke="#fff" stroke-width="1.200" opacity=".28"/>
<path d="M852.5 366.1L844.1 471.7" stroke="url(#mt)" stroke-width="6.400" stroke-linecap="round"/>
<path d="M847.8 368.6L839.7 470.6" stroke="#2f2f2f" stroke-width="2" opacity=".6"/>
<path d="M851.1 367.9L843.1 469.9" stroke="#fff" stroke-width="1.200" opacity=".28"/>
<path d="M863.3 369.7L858.1 465.8" stroke="url(#mt)" stroke-width="6.400" stroke-linecap="round"/>
<path d="M858.6 372.2L853.6 464.7" stroke="#2f2f2f" stroke-width="2" opacity=".6"/>
<path d="M862.0 371.5L857.0 464.0" stroke="#fff" stroke-width="1.200" opacity=".28"/>
<path d="M872.7 372.9L869.2 459.4" stroke="url(#mt)" stroke-width="6.400" stroke-linecap="round"/>
<path d="M868.0 375.3L864.7 458.2" stroke="#2f2f2f" stroke-width="2" opacity=".6"/>
<path d="M871.4 374.7L868.1 457.6" stroke="#fff" stroke-width="1.200" opacity=".28"/>
<path d="M875.800 375.700L885 386 896.400 411.400 889.600 444.400 873 455.400Z" fill="#141414"/>
<path d="M875.800 375.700L885 386 896.400 411.400 888 407 874.500 392Z" fill="#3d3d3d"/>
<path d="M979.1 379.0C979.1 385.5 978.3 392.0 976.7 398.4C975.0 404.8 972.6 411.2 969.5 417.4C966.3 423.6 962.3 429.8 957.7 435.7C953.1 441.6 947.7 447.4 941.7 452.9C935.7 458.4 929.0 463.7 921.8 468.7C914.6 473.7 906.7 478.4 898.4 482.9C890.1 487.3 881.3 491.4 872.0 495.2C862.8 499.0 853.1 502.4 843.1 505.5C833.1 508.6 822.8 511.4 812.2 513.7C801.6 516.1 790.7 518.1 779.7 519.8C768.7 521.4 757.4 522.7 746.2 523.5C734.9 524.4 723.4 524.9 712.0 525.0C700.6 525.1 689.1 524.8 677.7 524.1C666.3 523.4 654.9 522.3 643.8 520.8C632.6 519.3 621.5 517.4 610.8 515.1C600.0 512.8 589.4 510.1 579.3 507.1C569.1 504.0 559.2 500.5 549.9 496.7C540.6 492.9 531.6 488.7 523.3 484.1C514.9 479.6 507.1 474.8 499.9 469.7C492.8 464.5 486.2 459.1 480.4 453.5C474.6 447.9 469.4 442.0 465.0 436.0C460.6 430.0 456.9 423.8 453.9 417.5C451.0 411.3 448.8 404.8 447.3 398.4C445.8 392.0 445.1 385.5 445.1 379.0C445.1 372.5 445.9 366.0 447.4 359.6C448.9 353.2 451.1 346.8 454.0 340.5C456.9 334.2 460.6 328.0 464.9 322.0C469.2 316.0 474.3 310.0 480.0 304.4C485.7 298.7 492.2 293.2 499.2 288.0C506.2 282.8 514.0 277.9 522.2 273.3C530.4 268.7 539.3 264.3 548.6 260.4C557.9 256.5 567.8 252.9 578.0 249.7C588.2 246.5 598.8 243.7 609.7 241.4C620.5 239.0 631.7 237.1 643.0 235.6C654.3 234.1 665.8 233.0 677.3 232.3C688.8 231.7 700.5 231.5 712.0 231.6C723.5 231.8 735.1 232.4 746.4 233.4C757.8 234.3 769.1 235.7 780.1 237.4C791.1 239.1 802.0 241.3 812.6 243.7C823.1 246.2 833.5 249.0 843.5 252.1C853.4 255.3 863.1 258.8 872.3 262.6C881.5 266.4 890.4 270.6 898.7 275.0C907.0 279.4 914.8 284.2 922.0 289.2C929.3 294.2 936.0 299.5 942.0 305.0C948.0 310.5 953.4 316.3 958.0 322.2C962.6 328.2 966.5 334.3 969.7 340.5C972.8 346.8 975.2 353.2 976.8 359.6C978.4 366.0 979.1 372.5 979.1 379.0Z" fill="none" stroke="#f3842c" stroke-width="4.500"/>
</svg>
<!--/CANVAS-->
<!--PANEL-->
<div class="a" style="left:1112px;top:63px;width:7px;height:648px;background:#2c2c2c"></div>
<div class="a" style="left:1119px;top:63px;width:242px;height:15px;background:linear-gradient(#2e2e2e 0 1px,#393939 1px,#343434)"></div>
<svg class="a" style="left:1331px;top:68px" width="9" height="6" viewBox="0 0 9 6"><path d="M4 0v6L0.6 3zM8.6 0v6L5.2 3z" fill="#d6d6d6"/></svg>
<svg class="a" style="left:1349px;top:67.5px" width="7" height="7" viewBox="0 0 7 7"><path d="M0.8 0.8l5.4 5.4M6.2 0.8L0.8 6.2" stroke="#e0e0e0" stroke-width="1.5"/></svg>
<div class="a" style="left:1119px;top:78px;width:242px;height:17px;background:#3a3a3a"></div>
<div class="a" style="left:1162px;top:78px;width:98px;height:17px;background:#414141;border-left:1px solid #2c2c2c;border-right:1px solid #2c2c2c"></div>
<div class="a" style="left:1202px;top:78px;width:1px;height:17px;background:#2c2c2c"></div>
<div class="a" style="left:1119px;top:78px;width:43px;height:17px;background:#535353"></div>
<svg class="a" style="left:1342px;top:83px" width="15" height="7" viewBox="0 0 15 7"><path d="M0 1.5h4L2 4zM5.5 .6h9M5.5 3.4h9M5.5 6.2h9" stroke="#c8c8c8" stroke-width="1.1" fill="#c8c8c8"/></svg>
<!-- filter row -->
<div class="dd" style="left:1123.5px;top:100px;width:89.5px;height:19px"></div>
<svg class="a" style="left:1130.5px;top:104px" width="12" height="12" viewBox="0 0 12 12"><circle cx="7" cy="4.6" r="3.5" fill="none" stroke="#e4e4e4" stroke-width="1.5"/><path d="M4.4 7.2L1 10.8" stroke="#e4e4e4" stroke-width="1.9" stroke-linecap="round"/></svg>
<svg class="a" style="left:1202.5px;top:104.5px" width="6" height="10" viewBox="0 0 6 10"><path d="M0 4L3 .4 6 4zM0 6L3 9.6 6 6z" fill="#ececec"/></svg>
<svg class="a" style="left:1223.5px;top:103px" width="15" height="12" viewBox="0 0 15 12"><rect x=".7" y=".7" width="13" height="10" fill="#4e4e4e" stroke="#d8d8d8" stroke-width="1.3"/><path d="M2.4 9l2.8-3.600000000000001 2 2.2 1.6-1.4 3 2.8z" fill="#d8d8d8"/><circle cx="10.2" cy="3.6" r="1.1" fill="#d8d8d8"/></svg>
<svg class="a" style="left:1248px;top:103px" width="12" height="12" viewBox="0 0 12 12"><circle cx="6" cy="6" r="4.8" fill="#8c8c8c" stroke="#d8d8d8" stroke-width="1.4"/><path d="M2.6 9.4A4.8 4.8 0 0 1 9.4 2.6z" fill="#e2e2e2"/></svg>
<span class="t" style="left:1272.2px;top:100.4px;font-size:15.5px;font-family:'Liberation Serif',serif;font-weight:700;color:#dcdcdc;transform:scaleX(1.08)">T</span>
<svg class="a" style="left:1296px;top:103px" width="13" height="12" viewBox="0 0 13 12"><rect x="2" y="2" width="8.600000000000001" height="7.6" fill="none" stroke="#d8d8d8" stroke-width="1.3"/><path d="M.4.4h3v3h-3zM9.2.4h3v3h-3zM.4 8.200000000000001h3v3h-3zM9.2 8.200000000000001h3v3h-3z" fill="#535353" stroke="#d8d8d8" stroke-width=".9"/></svg>
<svg class="a" style="left:1320px;top:102px" width="13" height="14" viewBox="0 0 13 14"><path d="M4.600000000000001.7h4.8L12 3.4v8.200000000000001H4.600000000000001z" fill="#5a5a5a" stroke="#d8d8d8" stroke-width="1.2"/><path d="M9.2.8v2.8H12" fill="none" stroke="#d8d8d8" stroke-width="1"/><rect x=".6" y="6.4" width="6.4" height="6.4" fill="#cfcfcf"/></svg>
<div class="a" style="left:1346px;top:101px;width:9px;height:16px;border-radius:1px;background:linear-gradient(#8a8a8a 0,#6a6a6a 50%,#3f3f3f 50%,#3f3f3f);border:1px solid #474747"></div>
<div class="a" style="left:1119px;top:122px;width:242px;height:1px;background:#424242;box-shadow:0 1px 0 #5e5e5e"></div>
<!-- blend row -->
<div class="dd" style="left:1123.5px;top:127.5px;width:128px;height:19px"></div>
<svg class="a" style="left:1241.5px;top:132px" width="6" height="10" viewBox="0 0 6 10"><path d="M0 4L3 .4 6 4zM0 6L3 9.6 6 6z" fill="#ececec"/></svg>
<div class="field" style="left:1301px;top:127.5px;width:35px;height:18.5px;border-right:none;border-radius:2px 0 0 2px"></div>
<div class="fbtn" style="left:1336px;top:127.5px;width:18.5px;height:18.5px"></div>
<svg class="a" style="left:1342.8px;top:135.5px" width="6" height="4" viewBox="0 0 6 4"><path d="M0 0h6L3 3.6z" fill="#f0f0f0"/></svg>
<div class="a" style="left:1119px;top:150px;width:242px;height:1px;background:#424242;box-shadow:0 1px 0 #5e5e5e"></div>
<!-- lock row -->
<svg class="a" style="left:1157.5px;top:159.5px" width="12" height="12" viewBox="0 0 12 12"><rect x=".5" y=".5" width="11" height="11" fill="#dcdcdc" stroke="#c8c8c8"/><path d="M.9.9h3.4v3.4H.9zM7.7.9h3.4v3.4H7.700000000000001zM4.3 4.3h3.4v3.4H4.3zM.9 7.700000000000001h3.4v3.4H.9zM7.7 7.700000000000001h3.4v3.4H7.700000000000001z" fill="#8a8a8a"/></svg>
<svg class="a" style="left:1177.5px;top:157px" width="18" height="15" viewBox="0 0 20 17"><path d="M18.3 1.2L9.6 10.4" stroke="#d9d9d9" stroke-width="2.6" stroke-linecap="round" fill="none"/><path d="M10.2 8.6C8 7.6 5.6 9.2 5.3 11.4C5 13.6 2.6 14.8 0.8 15.2C4.4 17 9.4 16.2 11.2 12.4C11.8 11 11.4 9.4 10.2 8.6Z" fill="#dedede"/></svg>
<svg class="a" style="left:1200.5px;top:158px" width="14" height="14" viewBox="0 0 14 14"><path d="M7 2.5v9M2.5 7h9" stroke="#d8d8d8" stroke-width="1.4"/><path d="M7 .2l2.400000000000001 2.8H4.6zM7 13.8l2.4-2.8H4.6zM.2 7L3 4.6v4.8zM13.8 7L11 4.600000000000001v4.8z" fill="#d8d8d8"/></svg>
<svg class="a" style="left:1224.5px;top:158px" width="11" height="13" viewBox="0 0 11 13"><path d="M2.600000000000001 6V4a2.9 2.9 0 0 1 5.800000000000001 0v2" fill="none" stroke="#d8d8d8" stroke-width="1.7"/><rect x=".4" y="5.6" width="10.2" height="7" rx=".8" fill="#d8d8d8"/><rect x="4.7" y="7.6" width="1.6" height="2.8" fill="#4a4a4a"/></svg>
<div class="field" style="left:1301px;top:155.5px;width:35px;height:18.5px;border-right:none;border-radius:2px 0 0 2px"></div>
<div class="fbtn" style="left:1336px;top:155.5px;width:18.5px;height:18.5px"></div>
<svg class="a" style="left:1342.8px;top:163.5px" width="6" height="4" viewBox="0 0 6 4"><path d="M0 0h6L3 3.6z" fill="#f0f0f0"/></svg>
<!-- layer list -->
<div class="a" style="left:1119px;top:180px;width:226px;height:504px;background:#474747;border-top:1px solid #3a3a3a"></div>
<div class="a" style="left:1345px;top:180px;width:16px;height:504px;background:#4b4b4b;border-left:1px solid #444"></div>
<div class="a" style="left:1119px;top:181px;width:226px;height:28px;background:#535353"></div>
<div class="a" style="left:1150px;top:181px;width:195px;height:28px;background:#6a809b"></div>
<div class="a" style="left:1119px;top:209px;width:226px;height:1px;background:#3c3c3c"></div>
<div class="a" style="left:1119px;top:210px;width:226px;height:29px;background:#535353"></div>
<div class="a" style="left:1119px;top:239px;width:226px;height:1px;background:#3c3c3c"></div>
<div class="a" style="left:1149px;top:181px;width:1px;height:58px;background:#444"></div>
<svg class="a" style="left:1127px;top:190px" width="14" height="9" viewBox="0 0 14 9"><path d="M0.4 4.5C3 .6 11 .6 13.6 4.5 11 8.4 3 8.4.4 4.5z" fill="#cfcfcf"/><circle cx="7" cy="4.1" r="2.7" fill="#4a4a4a"/><circle cx="6.2" cy="3.3" r=".9" fill="#e8e8e8"/></svg>
<svg class="a" style="left:1127px;top:219px" width="14" height="9" viewBox="0 0 14 9"><path d="M0.4 4.5C3 .6 11 .6 13.6 4.5 11 8.4 3 8.4.4 4.5z" fill="#cfcfcf"/><circle cx="7" cy="4.1" r="2.7" fill="#4a4a4a"/><circle cx="6.2" cy="3.3" r=".9" fill="#e8e8e8"/></svg>
<!-- thumb 1 -->
<svg class="a" style="left:1151px;top:182px" width="37" height="26" viewBox="0 0 37 26"><path d="M.7 8V.7H10M27 .7h9.3V8M36.300000000000004 18v7.3H27M10 25.3H.7V18" fill="none" stroke="#fff" stroke-width="1.4"/><rect x="2.5" y="2.3" width="32" height="21.4" fill="#fff" stroke="#101010" stroke-width="1"/><path d="M3 6h2v2H3zM3 10h2v2H3zM3 14h2v2H3zM5 4h2v2H5zM5 8h2v2H5zM5 12h2v2H5z" fill="#d9dde2"/><path d="M16.5 6.500000000000001c-4 .2-6.200000000000001 3.6-4.800000000000001 7.6 1 2.2 3.4 2.8 9.200000000000001 1.8" fill="none" stroke="#1f6f8e" stroke-width="1.5"/><path d="M12 13.6c2 2 6 2 9 1.2" fill="none" stroke="#7fd0e4" stroke-width="1"/></svg>
<!-- thumb 2 -->
<svg class="a" style="left:1152.5px;top:213px" width="33" height="22" viewBox="0 0 33 22"><defs><radialGradient id="tg" cx=".5" cy=".5" r=".75"><stop offset="0" stop-color="#f4f4f4"/><stop offset="1" stop-color="#b4b4b4"/></radialGradient></defs><rect x=".5" y=".5" width="32" height="21" fill="url(#tg)" stroke="#0c0c0c"/><path d="M9.5 12.5c-.4-3 2.5-5 5.5-4l5 2.400000000000001" fill="none" stroke="#3a3a3a" stroke-width="1.1" stroke-dasharray="1.4 1.2"/><path d="M19.6 9.4l3.6.8.4 3-3.6 1z" fill="#2a2a2a"/></svg>
<!-- footer -->
<div class="a" style="left:1119px;top:684px;width:242px;height:18px;background:#535353;border-top:1px solid #626262;box-shadow:0 -1px 0 #3a3a3a"></div>
<div class="a" style="left:1119px;top:702px;width:242px;height:9px;background:#4d4d4d;border-top:1px solid #3a3a3a"></div>
<div class="a" style="left:1230px;top:704px;width:20px;height:4px;background:repeating-linear-gradient(90deg,#2a2a2a 0 1px,#4d4d4d 1px 2px)"></div>
<svg class="a" style="left:1156.5px;top:689.5px" width="15" height="8" viewBox="0 0 15 8"><rect x=".9" y=".9" width="7.6" height="6.2" rx="3.1" fill="none" stroke="#a6a6a6" stroke-width="1.7"/><rect x="6.5" y=".9" width="7.6" height="6.2" rx="3.1" fill="none" stroke="#a6a6a6" stroke-width="1.7"/></svg>
<span class="t" style="left:1185.5px;top:685.5px;font-size:14.5px;font-family:'Liberation Serif',serif;font-style:italic;font-weight:700;color:#dadada;letter-spacing:-.6px">fx</span>
<svg class="a" style="left:1197px;top:696.5px" width="4" height="3" viewBox="0 0 4 3"><path d="M0 0h4L2 2.6z" fill="#d8d8d8"/></svg>
<svg class="a" style="left:1211.5px;top:688.5px" width="14" height="10" viewBox="0 0 14 10"><rect width="14" height="10" fill="#d6d6d6"/><circle cx="7" cy="5" r="2.4" fill="#4a4a4a"/></svg>
<svg class="a" style="left:1239px;top:688px" width="12" height="12" viewBox="0 0 12 12"><circle cx="6" cy="6" r="4.9" fill="#4e4e4e" stroke="#d8d8d8" stroke-width="1.4"/><path d="M2.5 9.5A4.9 4.9 0 0 1 9.5 2.5z" fill="#dedede"/></svg>
<svg class="a" style="left:1251.5px;top:696.5px" width="4" height="3" viewBox="0 0 4 3"><path d="M0 0h4L2 2.6z" fill="#d8d8d8"/></svg>
<svg class="a" style="left:1265.5px;top:688px" width="13" height="11" viewBox="0 0 13 11"><path d="M0 .4h5l1.200000000000001 1.800000000000001H13V11H0z" fill="#d4d4d4"/></svg>
<svg class="a" style="left:1293.5px;top:688px" width="11" height="11" viewBox="0 0 11 11"><path d="M0 0h11v11H4.4V6.4H0z" fill="#d6d6d6"/><path d="M.6 7.400000000000001h3v3z" fill="#d6d6d6"/></svg>
<svg class="a" style="left:1319.5px;top:687px" width="12" height="13" viewBox="0 0 12 13"><path d="M.4 2.600000000000001h11.2M4 2.400000000000001V.8h4v1.600000000000001" fill="none" stroke="#d6d6d6" stroke-width="1.4"/><path d="M1.4 4h9.2l-.6 9H2z" fill="#d6d6d6"/><path d="M4 5.4v6M6 5.4v6M8 5.4v6" stroke="#535353" stroke-width=".9"/></svg>
<svg class="a" style="left:1349px;top:690px" width="10" height="10" viewBox="0 0 10 10"><path d="M8 1h1.500000000000001v1.500000000000001H8zM5.5 3.500000000000001h1.500000000000001V5H5.5zM8 3.500000000000001h1.500000000000001V5H8zM3 6h1.500000000000001v1.500000000000001H3zM5.5 6h1.500000000000001v1.500000000000001H5.5zM8 6h1.500000000000001v1.500000000000001H8zM.5 8.5H2V10H.5zM3 8.5h1.500000000000001V10H3zM5.5 8.5h1.500000000000001V10H5.5zM8 8.5h1.500000000000001V10H8z" fill="#2e2e2e"/></svg>
<div class="a" style="left:1344px;top:711px;width:17px;height:16px;background:#575757"></div>
<span class="t" style="left:1125.8px;top:81.5px;font-size:10.3px;letter-spacing:-0.9px;color:#f0f0f0;font-weight:700">Layers</span>
<span class="t" style="left:1169.1px;top:81.5px;font-size:10.3px;letter-spacing:-0.63px;color:#9c9c9c;font-weight:700">Paths</span>
<span class="t" style="left:1209.5px;top:81.5px;font-size:10.3px;letter-spacing:-0.61px;color:#9c9c9c;font-weight:700">Channels</span>
<span class="t" style="left:1144.7px;top:103.5px;font-size:10.3px;letter-spacing:-0.23px">Kind</span>
<span class="t" style="left:1130.9px;top:131.5px;font-size:10.3px;letter-spacing:-0.1px">Multiply</span>
<span class="t" style="left:1258.5px;top:130.5px;font-size:10.3px;letter-spacing:-0.07px">Opacity:</span>
<span class="t" style="left:1306.0px;top:131.5px;font-size:10.3px;letter-spacing:-0.41px">100%</span>
<span class="t" style="left:1124.8px;top:160.5px;font-size:10.3px;letter-spacing:-0.28px">Lock:</span>
<span class="t" style="left:1280.5px;top:159.5px;font-size:10.3px;letter-spacing:-0.22px">Fill:</span>
<span class="t" style="left:1306.2px;top:159.5px;font-size:10.3px;letter-spacing:-0.41px">100%</span>
<span class="t" style="left:1194.5px;top:191.5px;font-size:10.3px;letter-spacing:-0.26px">Layer 1</span>
<span class="t" style="left:1194.5px;top:220.5px;font-size:10.3px;letter-spacing:-0.37px">Layer1</span>
<!--STATUS-->
<div class="a" style="left:117.5px;top:713px;width:23px;height:12px;background:#5d5d5d;border:1px solid #525252"></div>
<svg class="a" style="left:119px;top:714px" width="20" height="10" viewBox="0 0 20 10"><circle cx="5" cy="5" r="2.6" fill="none" stroke="#3c3c3c" stroke-width="2.2" stroke-dasharray="1.4 1"/><path d="M11.5 4.5h5l-1.800000000000001-2.5M17.5 6a3 3 0 0 1-5.5 1" fill="none" stroke="#3c3c3c" stroke-width="1.5"/></svg>
<svg class="a" style="left:314.5px;top:715px" width="7" height="10" viewBox="0 0 7 10"><path d="M.4.4L6.800000000000001 5 .4 9.6z" fill="#f0f0f0"/></svg>
<span class="t" style="left:76.0px;top:714.5px;font-size:10.3px;letter-spacing:-0.36px;color:#f0f0f0">16.67%</span>
<span class="t" style="left:171.6px;top:714.5px;font-size:10.3px;letter-spacing:0.03px;color:#ececec">Missing: 0 / Changed: 0</span>
</body>
</html>
